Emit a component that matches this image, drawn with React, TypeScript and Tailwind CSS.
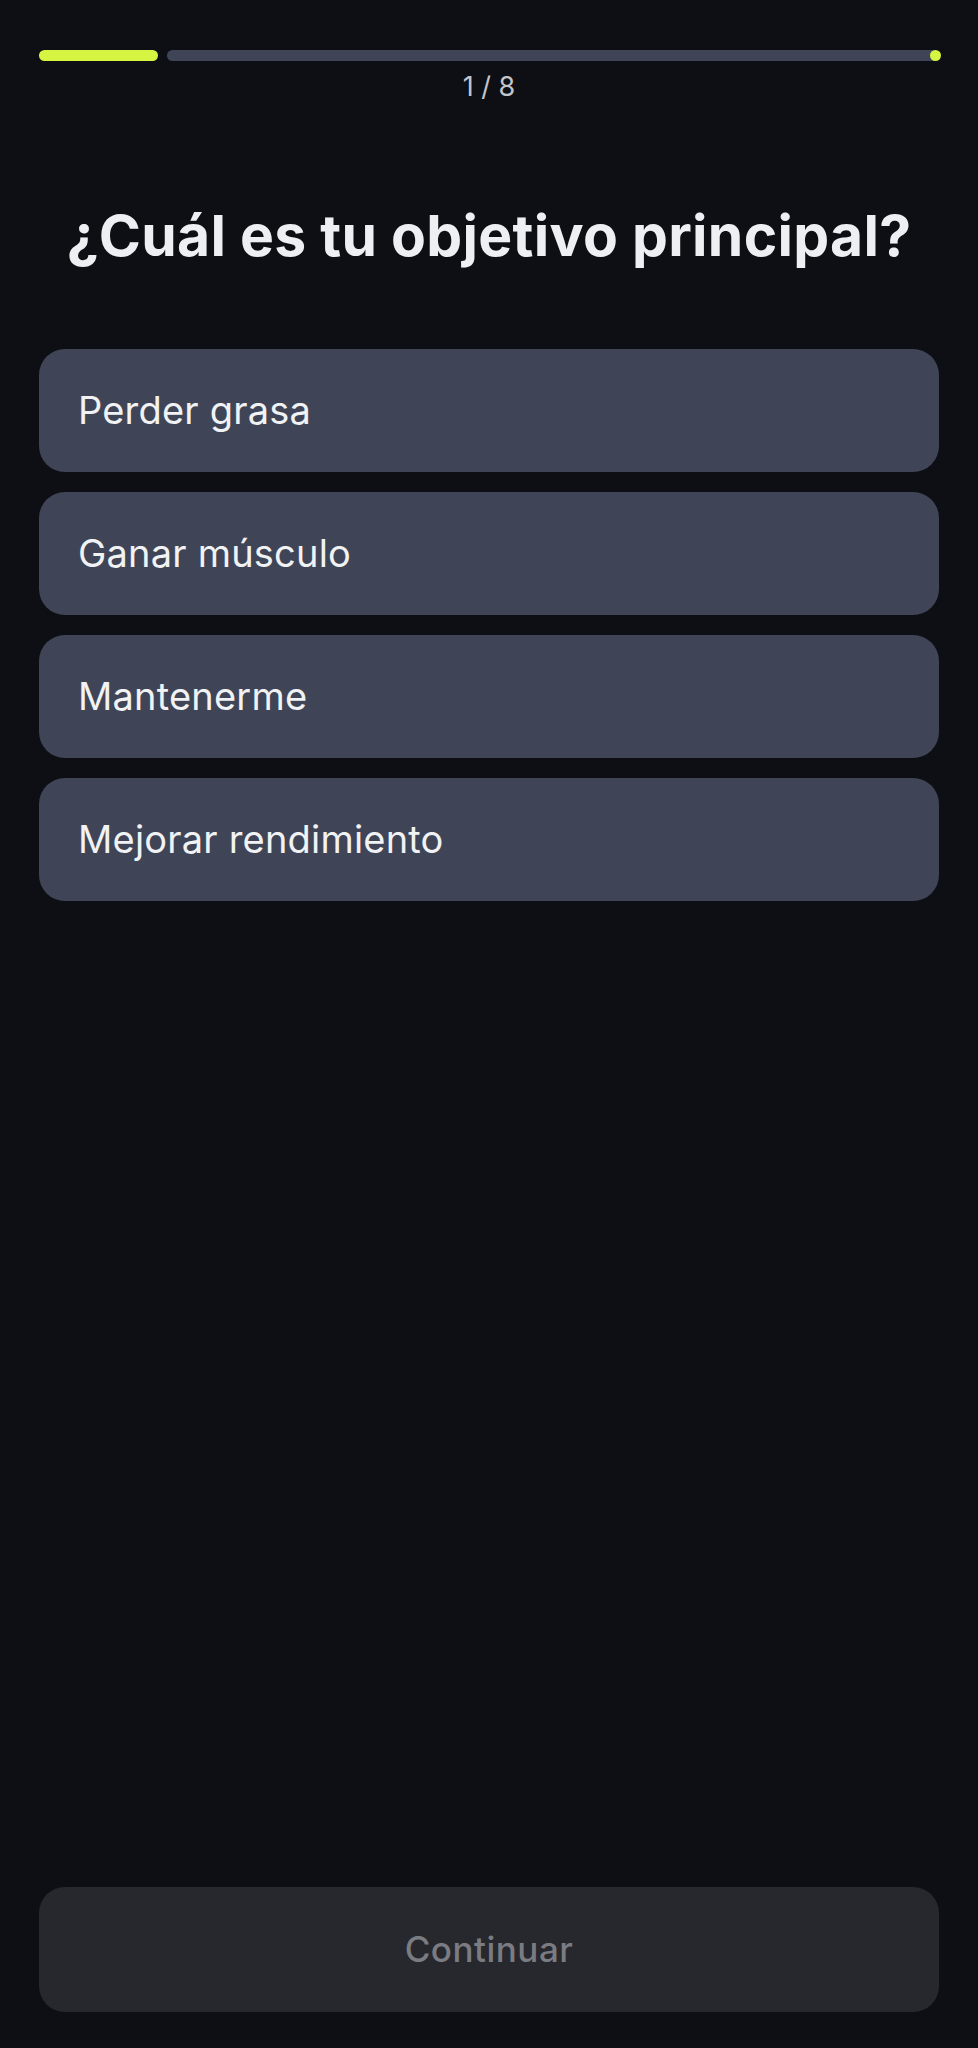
import React, { useState } from 'react';

const options = ['Perder grasa', 'Ganar músculo', 'Mantenerme', 'Mejorar rendimiento'];

export default function App() {
  const [selected, setSelected] = useState<string | null>(null);

  return (
    <div className="h-[2048px] bg-[#0d0f14] flex flex-col px-[39px] font-['Inter',sans-serif]">
      {/* progress */}
      <div className="pt-[50px] flex items-center gap-[9px]">
        <div className="w-[119px] h-[11px] rounded-full bg-[#d6f542]" />
        <div className="relative flex-1 h-[11px] rounded-full bg-[#3f4556]">
          <div className="absolute right-[-2px] top-[0px] w-[11px] h-[11px] rounded-full bg-[#d6f542]" />
        </div>
      </div>
      <div className="mt-[8px] text-center text-[27px] leading-[36px] text-[#c3c5cb]">1 / 8</div>

      <h1 className="mt-[98px] text-center text-[57px] leading-[66px] font-bold tracking-[0.3px] text-[#eeeff2]">
        ¿Cuál es tu objetivo principal?
      </h1>

      <div className="mt-[80px] flex flex-col gap-[20px]">
        {options.map((opt) => (
          <button
            key={opt}
            type="button"
            onClick={() => setSelected(opt)}
            className={`h-[123px] w-full rounded-[26px] flex items-center px-[39px] text-left text-[38px] tracking-[0.2px] text-[#f1f2f4] ${
              selected === opt ? 'bg-[#4b5366]' : 'bg-[#3f4556]'
            }`}
          >
            {opt}
          </button>
        ))}
      </div>

      <div className="mt-auto mb-[36px]">
        <button
          type="button"
          disabled={!selected}
          className="h-[125px] w-full rounded-[26px] bg-[#27282e] text-[35px] font-medium tracking-[0.5px] text-[#7b7c82]"
        >
          Continuar
        </button>
      </div>
    </div>
  );
}
